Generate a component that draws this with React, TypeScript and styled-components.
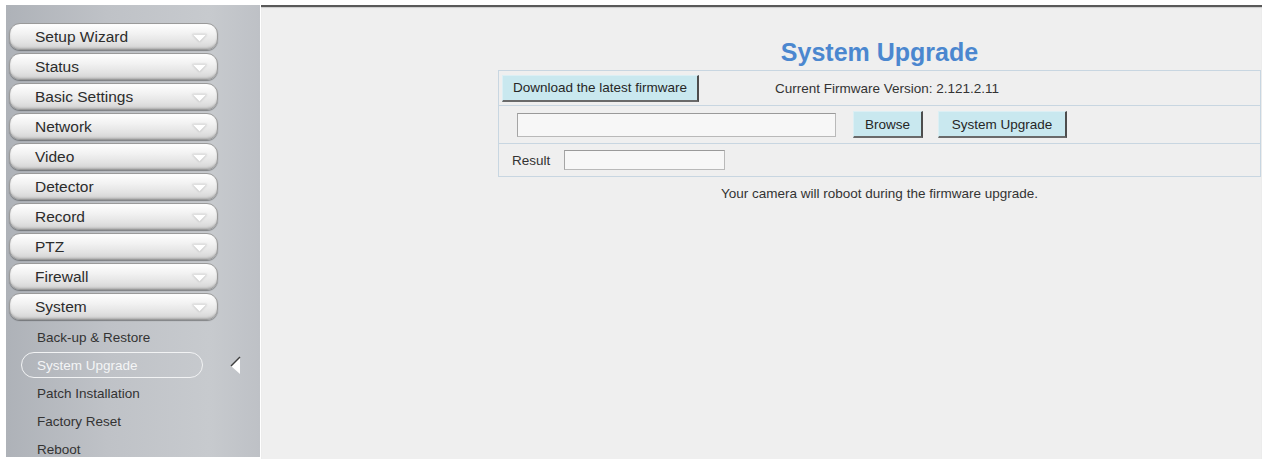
import React from "react";
import styled, { createGlobalStyle } from "styled-components";

const Global = createGlobalStyle`
  html, body { margin: 0; padding: 0; background: #ffffff; }
  body { font-family: "Liberation Sans", Arial, sans-serif; }
  * { box-sizing: border-box; }
`;

const Page = styled.div`
  display: flex;
  height: 459px;
  padding: 5px 6px 0 6px;
  overflow: hidden;
`;

const Sidebar = styled.nav`
  width: 254px;
  height: 452px;
  flex-shrink: 0;
  background: linear-gradient(to right, #aeb2b8 0%, #bfc2c7 40%, #c7cace 80%, #bec1c6 100%);
  padding: 18px 0 0 3px;
  display: flex;
  flex-direction: column;
  gap: 3px;
`;

const MenuButton = styled.div`
  width: 209px;
  height: 27px;
  flex-shrink: 0;
  border-radius: 11px;
  border: 1px solid #9a9a9a;
  background: linear-gradient(to bottom, #ffffff 0%, #f1f1f1 40%, #e2e2e2 75%, #d2d2d2 100%);
  box-shadow: inset 0 -1px 2px rgba(0, 0, 0, 0.18), 0 1px 1px rgba(0, 0, 0, 0.35);
  display: flex;
  align-items: center;
  padding-left: 25px;
  font-size: 15.5px;
  color: #2c2c2c;
`;

const MenuArrow = styled.svg`
  margin-left: auto;
  margin-right: 10px;
  margin-top: 2px;
  filter: drop-shadow(0 0 1px rgba(0, 0, 0, 0.2));
`;

const SubList = styled.div`
  display: flex;
  flex-direction: column;
`;

const SubRow = styled.div`
  height: 28px;
  display: flex;
  align-items: center;
`;

const SubItem = styled.div<{ $active?: boolean }>`
  margin-left: 12px;
  width: 182px;
  height: 26px;
  display: flex;
  align-items: center;
  padding-left: 15px;
  border-radius: 13px;
  border: 1.5px solid ${(p) => (p.$active ? "#f2f3f4" : "transparent")};
  font-size: 13.5px;
  color: ${(p) => (p.$active ? "#f4f5f6" : "#333333")};
`;

const Indicator = styled.svg`
  margin-left: 26px;
`;

const Main = styled.main`
  flex: 1;
  margin-left: 1px;
  background: #efefef;
  border-top: 2px solid #595959;
  box-shadow: inset 0 1px 1px rgba(0, 0, 0, 0.15);
  display: flex;
  flex-direction: column;
  align-items: flex-end;
`;

const Content = styled.div`
  width: 763px;
  margin-right: 1px;
  display: flex;
  flex-direction: column;
`;

const Title = styled.h1`
  margin: 30px 0 3px 0;
  height: 30px;
  line-height: 30px;
  text-align: center;
  font-size: 25px;
  font-weight: bold;
  color: #4b87cf;
`;

const Table = styled.div`
  border: 1px solid #c8d6e1;
  display: flex;
  flex-direction: column;
`;

const Row = styled.div<{ $h: number; $last?: boolean }>`
  height: ${(p) => p.$h + (p.$last ? 0 : 1)}px;
  border-bottom: ${(p) => (p.$last ? "none" : "1px solid #c8d6e1")};
  display: flex;
  align-items: center;
  font-size: 13.5px;
  color: #333;
`;

const Button = styled.div<{ $w: number; $ml: number }>`
  width: ${(p) => p.$w}px;
  height: 27px;
  margin-left: ${(p) => p.$ml}px;
  background: #c9e8ef;
  border-top: 1px solid #dceff4;
  border-left: 1px solid #dceff4;
  border-right: 2px solid #4d4d4d;
  border-bottom: 2px solid #6a6a6a;
  display: flex;
  align-items: center;
  justify-content: center;
  font-size: 13.5px;
  color: #262626;
`;

const Input = styled.div<{ $w: number; $h: number; $ml: number }>`
  width: ${(p) => p.$w}px;
  height: ${(p) => p.$h}px;
  margin-left: ${(p) => p.$ml}px;
  background: #f7f7f7;
  border: 1px solid #b9b9b9;
  border-top-color: #9a9a9a;
  border-left-color: #a5a5a5;
`;

const Label = styled.span<{ $ml: number }>`
  margin-left: ${(p) => p.$ml}px;
`;

const Note = styled.p`
  margin: 9px 0 0 0;
  line-height: 16px;
  text-align: center;
  font-size: 13.5px;
  color: #333;
`;

const menus = [
  "Setup Wizard",
  "Status",
  "Basic Settings",
  "Network",
  "Video",
  "Detector",
  "Record",
  "PTZ",
  "Firewall",
  "System",
];

const subs = ["Back-up & Restore", "System Upgrade", "Patch Installation", "Factory Reset", "Reboot"];

export default function App() {
  return (
    <>
      <Global />
      <Page>
        <Sidebar>
          {menus.map((m) => (
            <MenuButton key={m}>
              {m}
              <MenuArrow width="15" height="8" viewBox="0 0 15 8">
                <polygon points="0.5,0.5 14.5,0.5 7.5,7.5" fill="#ffffff" stroke="#d6d6d6" strokeWidth="0.6" />
              </MenuArrow>
            </MenuButton>
          ))}
          <SubList>
            {subs.map((s) => {
              const active = s === "System Upgrade";
              return (
                <SubRow key={s}>
                  <SubItem $active={active}>{s}</SubItem>
                  {active && (
                    <Indicator width="12" height="20" viewBox="0 0 12 20">
                      <polygon points="11,2 2,11 11,19" fill="#ffffff" />
                      <line x1="11" y1="2" x2="2" y2="11" stroke="#3c3c3c" strokeWidth="1.4" />
                    </Indicator>
                  )}
                </SubRow>
              );
            })}
          </SubList>
        </Sidebar>
        <Main>
          <Content>
            <Title>System Upgrade</Title>
            <Table>
              <Row $h={34}>
                <Button $w={197} $ml={3}>Download the latest firmware</Button>
                <Label $ml={76}>Current Firmware Version: 2.121.2.11</Label>
              </Row>
              <Row $h={37}>
                <Input $w={319} $h={24} $ml={18} />
                <Button $w={70} $ml={17}>Browse</Button>
                <Button $w={129} $ml={15}>System Upgrade</Button>
              </Row>
              <Row $h={32} $last>
                <Label $ml={13}>Result</Label>
                <Input $w={161} $h={20} $ml={14} />
              </Row>
            </Table>
            <Note>Your camera will roboot during the firmware upgrade.</Note>
          </Content>
        </Main>
      </Page>
    </>
  );
}
